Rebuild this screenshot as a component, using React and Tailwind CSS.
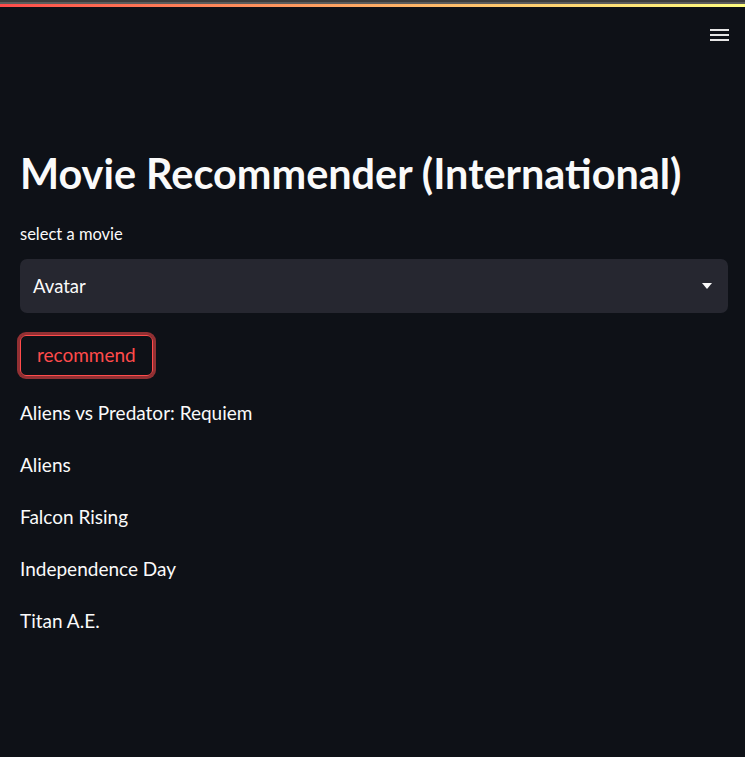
import React from "react";

export default function App() {
  const items = ["Aliens vs Predator: Requiem", "Aliens", "Falcon Rising", "Independence Day", "Titan A.E."];
  return (
    <div className="w-[745px] h-[757px] bg-[#0e1117] text-[#fafafa] overflow-hidden" style={{ fontFamily: "Lato, 'Noto Sans', sans-serif" }}>
      <div className="h-[2px] bg-[#3c3c3c]" />
      <div className="h-[2px] bg-[#5c5c5c]" />
      <div className="h-[3px] bg-gradient-to-r from-[#ff4b4b] to-[#fffd80]" />
      <div className="flex justify-end pr-[16px] pt-[22px]">
        <div className="flex flex-col gap-[3px] w-[19px]">
          <div className="h-[2px] bg-[#e6e6e6]" />
          <div className="h-[2px] bg-[#e6e6e6]" />
          <div className="h-[2px] bg-[#e6e6e6]" />
        </div>
      </div>
      <div className="pl-[20px] pr-[17px]">
        <h1 className="mt-[108px] text-[41.4px] leading-[48px] font-bold">Movie Recommender (International)</h1>
        <div className="mt-[27px] text-[16.5px] leading-[20px]">select a movie</div>
        <div className="mt-[15px] h-[54px] rounded-[7px] bg-[#262730] flex items-center justify-between pl-[13px] pr-[16px]">
          <span className="text-[18.5px] pt-[2px]">Avatar</span>
          <svg width="10" height="6" viewBox="0 0 10 6"><path d="M0 0 L10 0 L5 6 Z" fill="#fafafa" /></svg>
        </div>
        <div className="mt-[22px]">
          <button className="h-[41px] px-[16px] rounded-[6px] border border-[#ff4b4b] text-[#ff4b4b] text-[19px] shadow-[0_0_0_3px_rgba(255,75,75,0.55)] bg-transparent">recommend</button>
        </div>
        <div className="mt-[24px] flex flex-col gap-[26px] text-[19px] leading-[26px]">
          {items.map((t) => (
            <div key={t}>{t}</div>
          ))}
        </div>
      </div>
    </div>
  );
}
